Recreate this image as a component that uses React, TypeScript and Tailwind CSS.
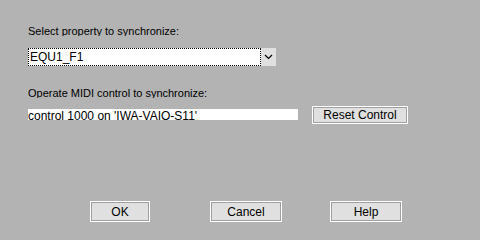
import React from 'react';

const font = { fontFamily: '"Liberation Sans", Arial, sans-serif' };

function Btn({ label, className }: { label: string; className: string }) {
  return (
    <button
      className={`${className} block border border-white bg-[#e0e0e0] p-0 text-[12px] leading-none text-black`}
    >
      <span className="flex h-full w-full items-center justify-center border border-[#a0a0a0]">
        {label}
      </span>
    </button>
  );
}

export default function App() {
  return (
    <div className="flex h-[240px] w-[480px] flex-col bg-[#b3b3b3] pl-[28px]" style={font}>
      <div className="mt-[26px] h-[10px] overflow-hidden text-[11px] leading-[11px] text-black">
        Select property to synchronize:
      </div>

      <div className="mt-[12px] flex h-[18px] w-[248px]">
        <div className="flex flex-1 items-center border border-dotted border-black bg-white pl-[1px] text-[12px] leading-none text-black">
          EQU1_F1
        </div>
        <div className="flex w-[15px] items-center justify-center bg-[#e0e0e0]">
          <svg width="9" height="6" viewBox="0 0 9 6">
            <path d="M1 1 L4.5 4.5 L8 1" fill="none" stroke="#000" strokeWidth="1.2" />
          </svg>
        </div>
      </div>

      <div className="mt-[22px] h-[10px] overflow-hidden text-[11px] leading-[11px] text-black">
        Operate MIDI control to synchronize:
      </div>

      <div className="mt-[8px] flex h-[18px] items-start">
        <div className="mt-[3px] h-[11px] w-[270px] overflow-hidden bg-white text-[12px] leading-[12px] text-black">
          <div className="mt-[1px]">control 1000 on 'IWA-VAIO-S11'</div>
        </div>
        <Btn label="Reset Control" className="ml-[14px] h-[18px] w-[96px]" />
      </div>

      <div className="mt-auto mb-[18px] ml-[62px] flex h-[21px] items-start">
        <Btn label="OK" className="h-[21px] w-[60px]" />
        <Btn label="Cancel" className="ml-[60px] h-[21px] w-[72px]" />
        <Btn label="Help" className="ml-[48px] h-[21px] w-[72px]" />
      </div>
    </div>
  );
}
